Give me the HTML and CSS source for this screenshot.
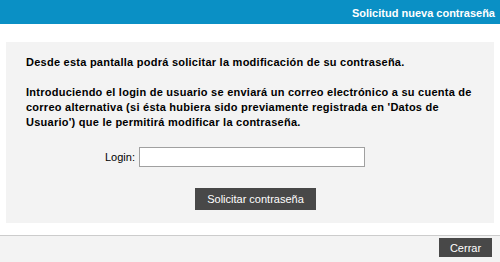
FILE: index.html
```html
<!DOCTYPE html>
<html lang="es">
<head>
<meta charset="utf-8">
<title>Solicitud nueva contraseña</title>
<link rel="stylesheet" href="styles.css">
</head>
<body>
<div class="dialog">
  <div class="titlebar">Solicitud nueva contraseña</div>
  <div class="content">
    <div class="panel">
      <p class="msg">Desde esta pantalla podrá solicitar la modificación de su contraseña.</p>
      <p class="msg">Introduciendo el login de usuario se enviará un correo electrónico a su cuenta de<br>correo alternativa (si ésta hubiera sido previamente registrada en 'Datos de<br>Usuario') que le permitirá modificar la contraseña.</p>
      <div class="login-row">
        <label class="login-label" for="login">Login:</label>
        <input class="login-input" id="login" type="text">
      </div>
      <div class="action-row">
        <button class="btn btn-request" type="button">Solicitar contraseña</button>
      </div>
    </div>
  </div>
  <div class="footer">
    <button class="btn btn-close" type="button">Cerrar</button>
  </div>
</div>
</body>
</html>
```
FILE: styles.css
```css
html, body {
  margin: 0;
  padding: 0;
  background: #ffffff;
}
body {
  font-family: "Liberation Sans", Arial, sans-serif;
  color: #000;
}
.dialog {
  width: 500px;
  height: 262px;
  display: flex;
  flex-direction: column;
}
.titlebar {
  height: 24px;
  line-height: 26px;
  background: #0a90c5;
  color: #fff;
  font-weight: bold;
  font-size: 11px;
  text-align: right;
  padding-right: 5px;
}
.content {
  padding: 18px 6px 12px;
}
.panel {
  background: #f3f3f3;
  height: 181px;
  box-sizing: border-box;
  padding: 13px 8px 0 20px;
}
.msg {
  margin: 0 0 15px;
  font-size: 11px;
  font-weight: bold;
  line-height: 15px;
  letter-spacing: 0.25px;
  white-space: nowrap;
}
.login-row {
  display: flex;
  align-items: center;
  gap: 4px;
  margin-top: 17px;
  padding-left: 79px;
}
.login-label {
  font-size: 11px;
}
.login-input {
  width: 226px;
  height: 20px;
  box-sizing: border-box;
  border: 1px solid #a0a0a0;
  background: #fff;
  margin: 0;
  padding: 0 3px;
  font: 11px "Liberation Sans", Arial, sans-serif;
}
.action-row {
  margin-top: 21px;
  padding-left: 169px;
}
.btn {
  background: #484848;
  color: #fff;
  border: none;
  margin: 0;
  font-family: "Liberation Sans", Arial, sans-serif;
  font-size: 11px;
  padding: 0;
}
.btn-request {
  width: 121px;
  height: 22px;
}
.footer {
  flex: 1;
  border-top: 1px solid #cccccc;
  background: #f3f3f3;
  display: flex;
  justify-content: flex-end;
  align-items: flex-start;
  padding: 2px 8px 0 0;
}
.btn-close {
  width: 53px;
  height: 19px;
}
```
